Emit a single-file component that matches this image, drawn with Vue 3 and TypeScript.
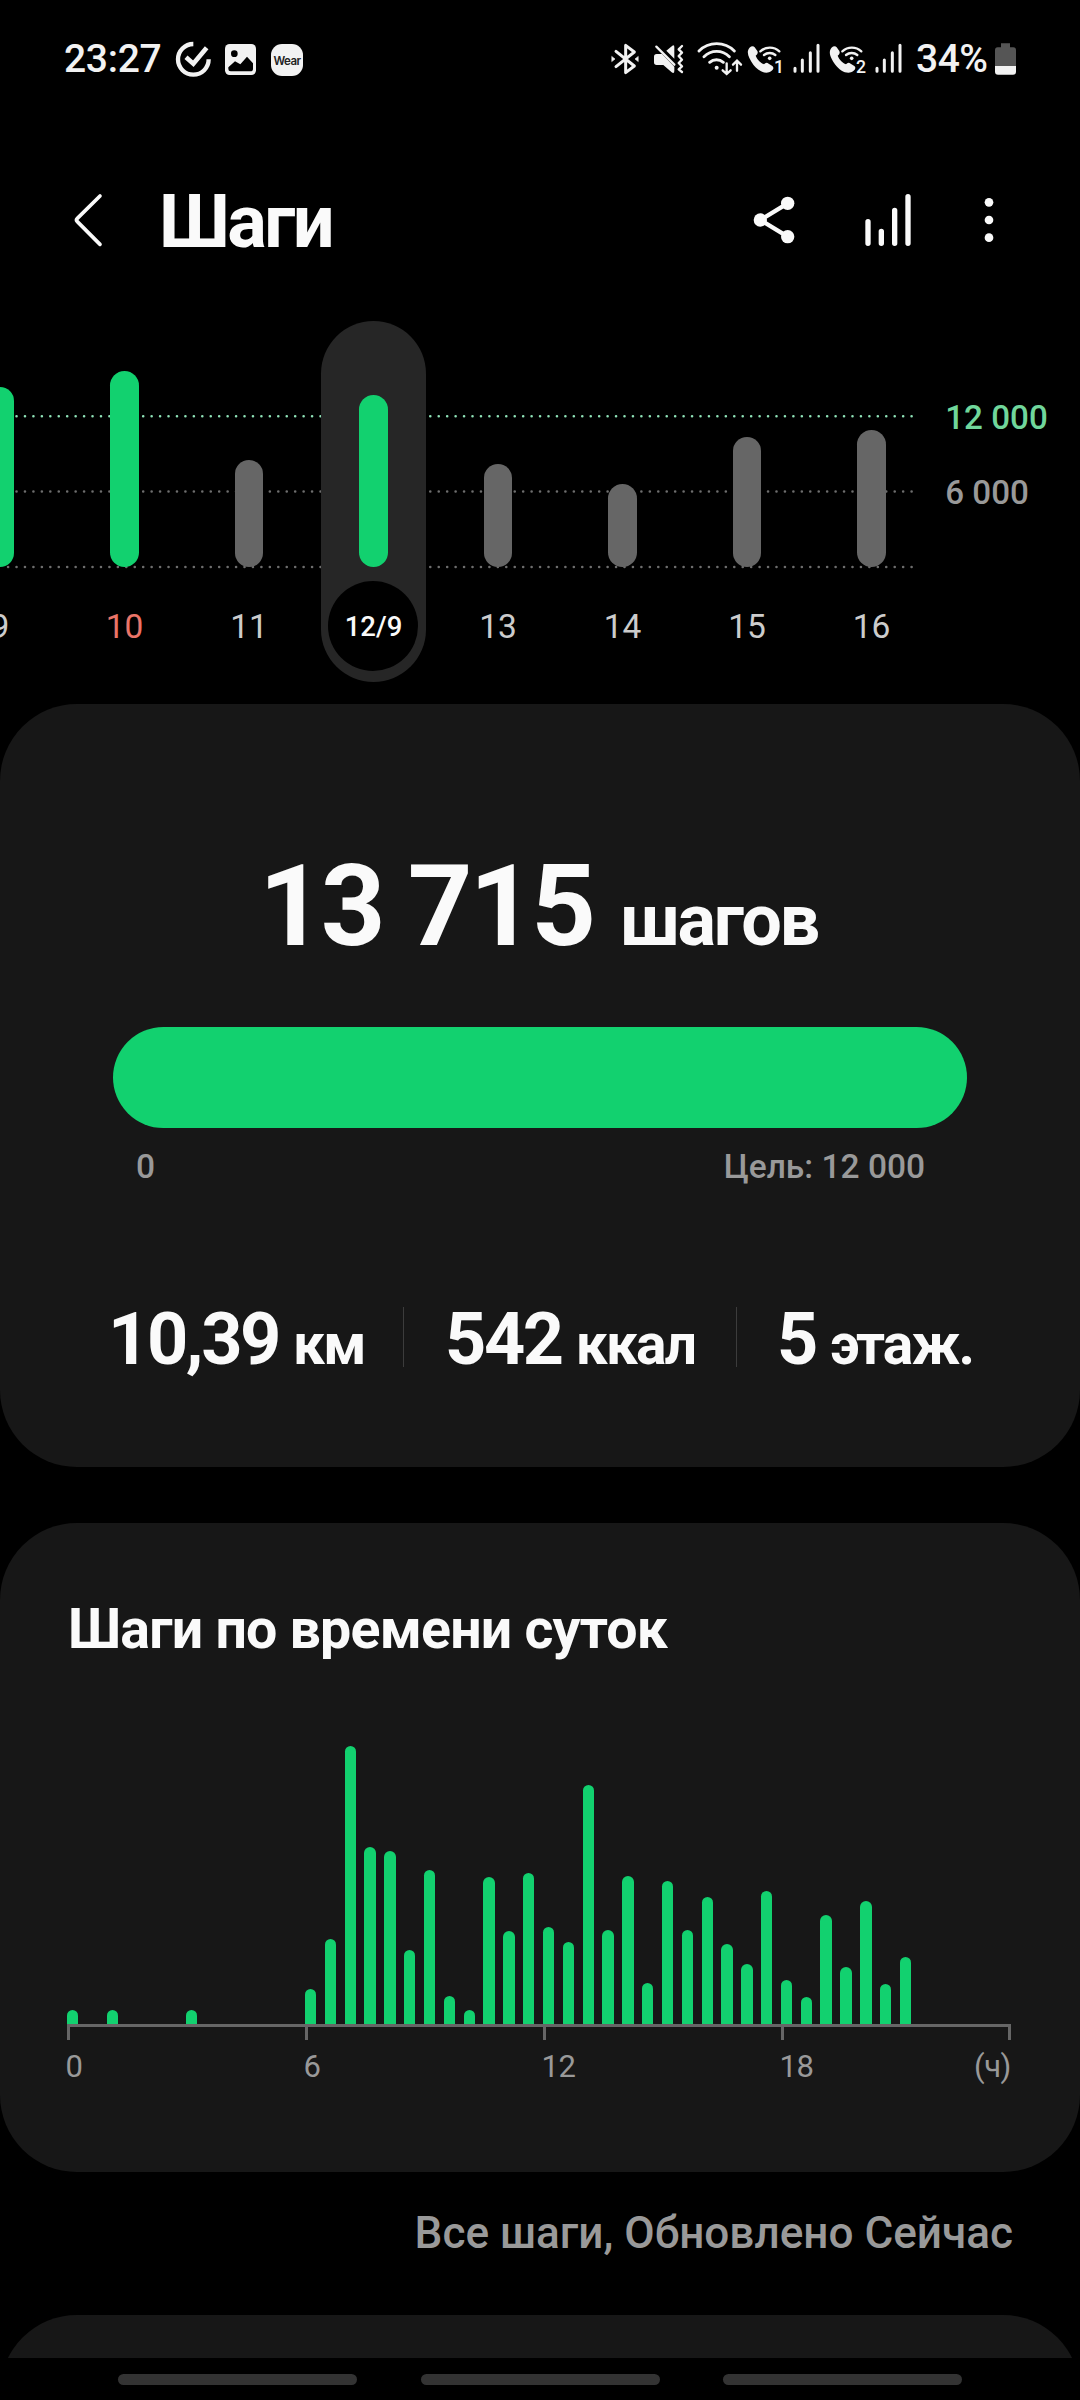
<script setup lang="ts">
interface Day {
  label: string
  height: number
  goal: boolean
  holiday?: boolean
  selected?: boolean
}

const days: Day[] = [
  { label: '9', height: 180, goal: true },
  { label: '10', height: 196, goal: true, holiday: true },
  { label: '11', height: 107, goal: false },
  { label: '12/9', height: 172, goal: true, selected: true },
  { label: '13', height: 103, goal: false },
  { label: '14', height: 83, goal: false },
  { label: '15', height: 130, goal: false },
  { label: '16', height: 137.5, goal: false },
]

const gridLines = [
  { y: 136.3, color: '#8fe3b8' },
  { y: 211.5, color: '#6e6e6e' },
  { y: 287, color: '#6e6e6e' },
]

const stats = [
  { value: '10,39', unit: 'км' },
  { value: '542', unit: 'ккал' },
  { value: '5', unit: 'этаж.' },
]

// One entry per half hour, starting at midnight.
const halfHours: number[] = [
  14, 0, 14, 0, 0, 0, 14, 0, 0, 0, 0, 0, 35, 85, 278, 177, 173, 74, 154, 28, 14,
  147, 93, 151, 97, 82, 239, 94, 148, 41, 143, 94, 127, 80, 60, 133, 44, 27, 109,
  57, 123, 40, 67,
]

const hours = ['0', '6', '12', '18']
</script>

<template>
  <div class="screen">
    <div class="status">
      <span class="clock">23:27</span>
      <svg class="i-check" width="40" height="80" viewBox="399 0 120 240" fill="none" stroke="#f2f2f2">
        <path d="M460 72A46 46 0 1 0 506 118" stroke-width="13" />
        <path d="M438 112L460 131L500 83" stroke-width="14" />
      </svg>
      <svg class="i-image" width="35" height="80" viewBox="549 0 105 240">
        <rect x="555" y="72" width="93" height="93" rx="14" fill="#f2f2f2" />
        <circle cx="583" cy="101" r="10" fill="#000" />
        <path d="M565 142L585 124L601 133L621 110L639 130V146Q639 154 631 154H572Q565 154 565 147Z" fill="#000" />
      </svg>
      <span class="wear">Wear</span>

      <div class="status-right">
        <svg width="30" height="80" viewBox="60 0 90 240" fill="none" stroke="#f2f2f2" stroke-width="9" stroke-linecap="round" stroke-linejoin="round">
          <path d="M78 94L133 138L107 158V76L133 96L78 140" />
          <path d="M66 110L75 117L66 124ZM144 110L135 117L144 124Z" fill="#f2f2f2" stroke-width="2" />
        </svg>
        <svg class="i-mute" width="32" height="80" viewBox="189 0 96 240" fill="#f2f2f2">
          <path d="M192 110Q192 102 200 102H216L253 140V152Q253 162 245 157L220 135H200Q192 135 192 127Z" />
          <path d="M229 92L247 77Q253 73 253 81V116Z" />
          <path d="M199 80L253 134" fill="none" stroke="#f2f2f2" stroke-width="7" stroke-linecap="round" />
          <path d="M276 78L266 88L276 98L266 108L276 119L266 129L276 139L266 148L276 156" fill="none" stroke="#f2f2f2" stroke-width="7" stroke-linejoin="round" stroke-linecap="round" />
        </svg>
        <svg class="i-wifi" width="47" height="80" viewBox="321 0 141 240" fill="none" stroke="#f2f2f2" stroke-width="8.5" stroke-linecap="round">
          <path d="M327 93A75 75 0 0 1 433 93M342 110A54 54 0 0 1 418 110M359 127A31 31 0 0 1 400 127" />
          <circle cx="380" cy="143" r="6" fill="#f2f2f2" stroke="none" />
          <path d="M410 130V161M398 151L410 162L422 151M441 152V123M429 134L441 122L453 134" stroke-width="7" />
        </svg>
        <template v-for="sim in 2" :key="sim">
          <svg :class="'i-call' + sim" width="39" height="80" viewBox="0 0 117 240">
            <path d="M6 92C8 82 20 74 26 82L34 93C37 99 34 103 29 107C33 118 44 129 54 133C58 128 63 127 68 131L79 138C84 142 83 148 76 153C60 166 35 152 22 134C12 120 3 104 6 92Z" fill="#f2f2f2" />
            <path d="M43 94A42 42 0 0 1 100 94M54 105A27 27 0 0 1 88 105" fill="none" stroke="#f2f2f2" stroke-width="7" stroke-linecap="round" />
            <circle cx="71" cy="115" r="5.5" fill="#f2f2f2" />
            <text x="84" y="158" fill="#f2f2f2" font-size="53" font-weight="500">{{ sim }}</text>
          </svg>
          <svg :class="'i-signal' + sim" width="29" height="80" viewBox="0 0 87 240" fill="none" stroke="#f2f2f2" stroke-width="9" stroke-linecap="round">
            <path d="M9 145V154M31 120V154M55 98V154M78 76V154" />
          </svg>
        </template>
        <span class="percent">34%</span>
        <svg width="23" height="80" viewBox="522 0 69 240">
          <path d="M543 70H570V82H580Q588 82 588 91V140H525V91Q525 82 533 82H543Z" fill="#555" />
          <path d="M525 138H588V155Q588 164 579 164H534Q525 164 525 155Z" fill="#f2f2f2" />
        </svg>
      </div>
    </div>

    <header class="header">
      <svg width="30" height="120" viewBox="99 0 90 360" fill="none" stroke="#fafafa" stroke-width="11" stroke-linecap="round" stroke-linejoin="round">
        <path d="M180 108L112 175Q107 180 112 185L180 253" />
      </svg>
      <h1>Шаги</h1>
      <div class="actions">
        <svg width="43" height="120" viewBox="99 0 129 360" fill="#fafafa">
          <path d="M203 130L121 180L203 230" fill="none" stroke="#fafafa" stroke-width="13" />
          <circle cx="121" cy="180" r="20" />
          <circle cx="203" cy="130" r="20" />
          <circle cx="203" cy="230" r="20" />
        </svg>
        <svg class="i-chart" width="48" height="120" viewBox="432 0 144 360" fill="none" stroke="#fafafa" stroke-width="16" stroke-linecap="round">
          <path d="M444 185V250M484 214V250M524 151V250M564 110V250" />
        </svg>
        <svg class="i-more" width="12" height="120" viewBox="789 0 36 360" fill="#fafafa">
          <circle cx="807" cy="127" r="13" />
          <circle cx="807" cy="180" r="13" />
          <circle cx="807" cy="233" r="13" />
        </svg>
      </div>
    </header>

    <section class="trend">
      <svg class="grid" width="920" height="300" viewBox="0 0 920 300">
        <line v-for="g in gridLines" :key="g.y" x1="911.6" x2="4" :y1="g.y" :y2="g.y" :stroke="g.color" stroke-width="2.6" stroke-linecap="round" stroke-dasharray="0 8.444" />
      </svg>
      <div class="days">
        <div v-for="d in days" :key="d.label" class="day" :class="{ selected: d.selected, holiday: d.holiday }">
          <div class="track">
            <div class="bar" :class="{ goal: d.goal }" :style="{ height: d.height + 'px' }"></div>
          </div>
          <div class="date">{{ d.label }}</div>
        </div>
      </div>
      <div class="scale">
        <span class="target">12 000</span>
        <span>6 000</span>
      </div>
    </section>

    <section class="card summary">
      <div class="total">13 715<span class="unit">шагов</span></div>
      <div class="progress"></div>
      <div class="range"><span>0</span><span>Цель: 12 000</span></div>
      <div class="stats">
        <div v-for="s in stats" :key="s.unit" class="stat">{{ s.value }}<span class="unit">{{ s.unit }}</span></div>
      </div>
    </section>

    <section class="card hourly">
      <h2>Шаги по времени суток</h2>
      <div class="bars">
        <div v-for="(h, i) in halfHours" :key="i" class="slot">
          <div v-if="h" class="hbar" :style="{ height: h + 'px' }"></div>
        </div>
      </div>
      <div class="axis">
        <i v-for="h in hours" :key="h"></i>
      </div>
      <div class="hours">
        <span v-for="h in hours" :key="h" class="hour">{{ h }}</span>
        <span class="hour-unit">(ч)</span>
      </div>
    </section>

    <p class="updated">Все шаги, Обновлено Сейчас</p>
    <div class="next"><div class="card peek"></div></div>
    <nav class="nav"><i></i><i></i><i></i></nav>
  </div>
</template>

<style>
body {
  background: #000;
}
</style>

<style scoped>
.screen {
  width: 1080px;
  height: 2400px;
  overflow: hidden;
  box-sizing: border-box;
  padding-top: 20px;
  background: #000;
  color: #fafafa;
  font-family: Roboto, "Noto Sans", sans-serif;
  display: flex;
  flex-direction: column;
}
.screen > * {
  flex-shrink: 0;
}
svg {
  display: block;
  flex-shrink: 0;
}

/* status bar */
.status {
  height: 80px;
  display: flex;
  align-items: center;
  padding: 0 63px 0 64px;
  color: #f2f2f2;
}
.clock {
  width: 109px;
  font-size: 39px;
  font-weight: 500;
  line-height: 79px;
  height: 80px;
  letter-spacing: -0.3px;
  white-space: nowrap;
}
.i-image {
  margin-left: 10px;
}
.wear {
  margin-left: 13px;
  width: 32px;
  height: 32px;
  border-radius: 11px;
  background: #f2f2f2;
  color: #222;
  font: 600 11.5px/34px Inter, sans-serif;
  letter-spacing: -0.5px;
  text-align: center;
}
.status-right {
  margin-left: auto;
  display: flex;
  align-items: center;
}
.i-mute {
  margin-left: 13px;
}
.i-wifi {
  margin-left: 12px;
}
.i-call1 {
  margin-left: 2px;
}
.i-signal1 {
  margin-left: 7px;
}
.i-call2,
.i-signal2 {
  margin-left: 7px;
}
.percent {
  margin-left: 13px;
  width: 78px;
  height: 80px;
  font-size: 39px;
  font-weight: 500;
  line-height: 79px;
  letter-spacing: -0.5px;
  white-space: nowrap;
}

/* title row */
.header {
  margin-top: 60px;
  height: 120px;
  display: flex;
  align-items: center;
  padding: 0 85px 0 73px;
}
h1 {
  margin: 0 0 0 56px;
  font-size: 74px;
  font-weight: 700;
  line-height: 123px;
  height: 120px;
  letter-spacing: -2.6px;
}
.actions {
  margin-left: auto;
  display: flex;
}
.i-chart {
  margin-left: 68px;
}
.i-more {
  margin-left: 71px;
}

/* daily trend */
.trend {
  position: relative;
  height: 424px;
  display: flex;
}
.grid {
  position: absolute;
  left: 0;
  top: 0;
}
.days {
  position: relative;
  display: flex;
  margin-left: -62.3px;
  flex-shrink: 0;
}
.day {
  width: 124.5px;
  display: flex;
  flex-direction: column;
  align-items: center;
}
.track {
  height: 247px;
  margin-top: 40px;
  width: 105px;
  display: flex;
  align-items: flex-end;
  justify-content: center;
}
.bar {
  width: 28.5px;
  border-radius: 15px;
  background: #666;
}
.bar.goal {
  background: #12d16f;
}
.date {
  margin-top: 40px;
  font-size: 33.5px;
  line-height: 40px;
  color: #ccc;
}
.holiday .date {
  color: #ea7468;
}
.selected {
  width: 105px;
  height: 361px;
  margin: 41px 9.75px 0;
  border-radius: 53px;
  background: #262626;
}
.selected .track {
  margin-top: 0;
  height: 246px;
}
.selected .date {
  margin-top: 14px;
  width: 90px;
  height: 90px;
  border-radius: 50%;
  background: #000;
  color: #fafafa;
  font-size: 27.5px;
  font-weight: 500;
  line-height: 92px;
  text-align: center;
}
.scale {
  padding: 118px 0 0 11.5px;
  display: flex;
  flex-direction: column;
  gap: 35px;
  font-size: 33.2px;
  font-weight: 500;
  line-height: 40px;
  color: #999;
  white-space: nowrap;
}
.target {
  color: #70d69b;
}

/* cards */
.card {
  background: #171717;
  border-radius: 77px;
  box-sizing: border-box;
}
.summary {
  height: 763px;
  padding: 133px 113px 0;
}
.total {
  margin-left: -3px;
  text-align: center;
  font-size: 113px;
  font-weight: 700;
  line-height: 140px;
  height: 140px;
  letter-spacing: -3px;
  white-space: nowrap;
}
.total .unit {
  font-size: 72px;
  line-height: 1;
  margin-left: 27px;
  letter-spacing: -2.2px;
}
.progress {
  margin-top: 50px;
  height: 101px;
  border-radius: 51px;
  background: #12d16f;
}
.range {
  margin-top: 19px;
  padding: 0 42px 0 23px;
  display: flex;
  justify-content: space-between;
  font-size: 33.5px;
  font-weight: 500;
  line-height: 40px;
  color: #999;
}
.stats {
  margin: 120px -20px 0 -5px;
  height: 60px;
  display: grid;
  grid-template-columns: 295px 333px 1fr;
  grid-template-rows: 60px;
}
.stat {
  font-size: 72px;
  font-weight: 700;
  line-height: 66px;
  letter-spacing: -2.4px;
  white-space: nowrap;
}
.stat + .stat {
  border-left: 1px solid #3c3c3c;
  padding-left: 41px;
}
.stat:last-child {
  padding-left: 40px;
}
.stat .unit {
  font-size: 57px;
  line-height: 1;
  margin-left: 14px;
  letter-spacing: -1.9px;
}
.hourly {
  margin-top: 56px;
  height: 649px;
  padding: 72px 69px 0 67px;
}
h2 {
  margin: 0 0 0 1px;
  font-size: 55.5px;
  font-weight: 700;
  line-height: 70px;
  letter-spacing: -0.8px;
  white-space: nowrap;
}
.bars {
  margin-top: 59px;
  height: 300px;
  display: flex;
  align-items: flex-end;
}
.slot {
  width: 19.83px;
  flex-shrink: 0;
}
.hbar {
  width: 11.4px;
  border-radius: 6px 6px 0 0;
  background: #12d16f;
}
.axis {
  height: 13px;
  border-top: 3px solid #666;
  border-right: 3px solid #666;
  display: flex;
}
.axis i {
  width: 235px;
  border-left: 3px solid #666;
  flex-shrink: 0;
}
.axis i:last-child {
  width: 0;
}
.hours {
  margin: 7px 0 0 -1.5px;
  display: flex;
  font-size: 31px;
  line-height: 40px;
  letter-spacing: -0.4px;
  color: #999;
}
.hour {
  width: 238px;
}
.hour:nth-child(4) {
  width: auto;
}
.hour-unit {
  margin-left: auto;
}

/* footer */
.updated {
  margin: 31px 67px 0;
  text-align: right;
  font-size: 44.1px;
  font-weight: 500;
  line-height: 60px;
  color: #999;
}
.next {
  margin-top: 52px;
  height: 43px;
  overflow: hidden;
}
.peek {
  height: 200px;
}
.nav {
  height: 42px;
  padding: 16px 118px 0;
  display: flex;
  justify-content: space-between;
  box-sizing: border-box;
}
.nav i {
  width: 239px;
  height: 11px;
  border-radius: 5.5px;
  background: #333;
}
</style>
